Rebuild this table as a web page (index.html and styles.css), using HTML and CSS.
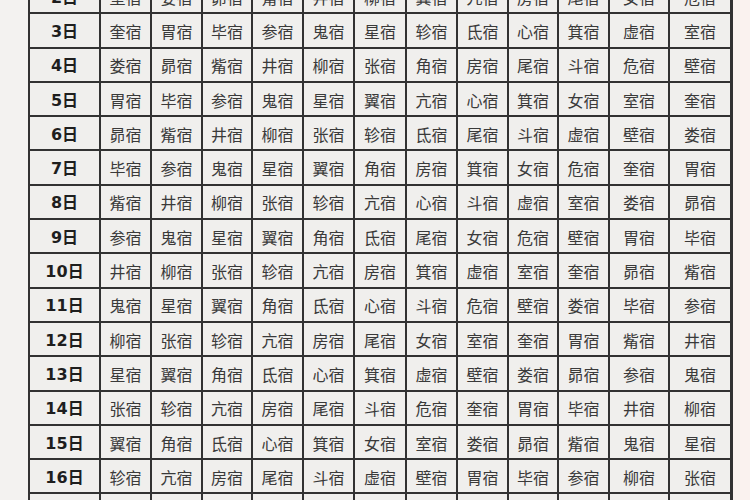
FILE: index.html
```html
<!DOCTYPE html>
<html lang="zh">
<head>
<meta charset="utf-8">
<title>宿曜表</title>
<link rel="stylesheet" href="styles.css">
</head>
<body>
<div class="page">
  <div class="side-left"></div>
  <table class="xiu">
    <colgroup>
      <col class="c-day"><col class="c49"><col class="c49"><col class="c48"><col class="c49"><col class="c49"><col class="c50"><col class="c49"><col class="c49"><col class="c48"><col class="c49"><col class="c58"><col class="c60">
    </colgroup>
    <tbody>
      <tr><th>2日</th><td>壁宿</td><td>娄宿</td><td>昴宿</td><td>觜宿</td><td>井宿</td><td>柳宿</td><td>翼宿</td><td>亢宿</td><td>房宿</td><td>尾宿</td><td>女宿</td><td>危宿</td></tr>
      <tr><th>3日</th><td>奎宿</td><td>胃宿</td><td>毕宿</td><td>参宿</td><td>鬼宿</td><td>星宿</td><td>轸宿</td><td>氐宿</td><td>心宿</td><td>箕宿</td><td>虚宿</td><td>室宿</td></tr>
      <tr><th>4日</th><td>娄宿</td><td>昴宿</td><td>觜宿</td><td>井宿</td><td>柳宿</td><td>张宿</td><td>角宿</td><td>房宿</td><td>尾宿</td><td>斗宿</td><td>危宿</td><td>壁宿</td></tr>
      <tr><th>5日</th><td>胃宿</td><td>毕宿</td><td>参宿</td><td>鬼宿</td><td>星宿</td><td>翼宿</td><td>亢宿</td><td>心宿</td><td>箕宿</td><td>女宿</td><td>室宿</td><td>奎宿</td></tr>
      <tr><th>6日</th><td>昴宿</td><td>觜宿</td><td>井宿</td><td>柳宿</td><td>张宿</td><td>轸宿</td><td>氐宿</td><td>尾宿</td><td>斗宿</td><td>虚宿</td><td>壁宿</td><td>娄宿</td></tr>
      <tr><th>7日</th><td>毕宿</td><td>参宿</td><td>鬼宿</td><td>星宿</td><td>翼宿</td><td>角宿</td><td>房宿</td><td>箕宿</td><td>女宿</td><td>危宿</td><td>奎宿</td><td>胃宿</td></tr>
      <tr><th>8日</th><td>觜宿</td><td>井宿</td><td>柳宿</td><td>张宿</td><td>轸宿</td><td>亢宿</td><td>心宿</td><td>斗宿</td><td>虚宿</td><td>室宿</td><td>娄宿</td><td>昴宿</td></tr>
      <tr><th>9日</th><td>参宿</td><td>鬼宿</td><td>星宿</td><td>翼宿</td><td>角宿</td><td>氐宿</td><td>尾宿</td><td>女宿</td><td>危宿</td><td>壁宿</td><td>胃宿</td><td>毕宿</td></tr>
      <tr><th>10日</th><td>井宿</td><td>柳宿</td><td>张宿</td><td>轸宿</td><td>亢宿</td><td>房宿</td><td>箕宿</td><td>虚宿</td><td>室宿</td><td>奎宿</td><td>昴宿</td><td>觜宿</td></tr>
      <tr><th>11日</th><td>鬼宿</td><td>星宿</td><td>翼宿</td><td>角宿</td><td>氐宿</td><td>心宿</td><td>斗宿</td><td>危宿</td><td>壁宿</td><td>娄宿</td><td>毕宿</td><td>参宿</td></tr>
      <tr><th>12日</th><td>柳宿</td><td>张宿</td><td>轸宿</td><td>亢宿</td><td>房宿</td><td>尾宿</td><td>女宿</td><td>室宿</td><td>奎宿</td><td>胃宿</td><td>觜宿</td><td>井宿</td></tr>
      <tr><th>13日</th><td>星宿</td><td>翼宿</td><td>角宿</td><td>氐宿</td><td>心宿</td><td>箕宿</td><td>虚宿</td><td>壁宿</td><td>娄宿</td><td>昴宿</td><td>参宿</td><td>鬼宿</td></tr>
      <tr><th>14日</th><td>张宿</td><td>轸宿</td><td>亢宿</td><td>房宿</td><td>尾宿</td><td>斗宿</td><td>危宿</td><td>奎宿</td><td>胃宿</td><td>毕宿</td><td>井宿</td><td>柳宿</td></tr>
      <tr><th>15日</th><td>翼宿</td><td>角宿</td><td>氐宿</td><td>心宿</td><td>箕宿</td><td>女宿</td><td>室宿</td><td>娄宿</td><td>昴宿</td><td>觜宿</td><td>鬼宿</td><td>星宿</td></tr>
      <tr><th>16日</th><td>轸宿</td><td>亢宿</td><td>房宿</td><td>尾宿</td><td>斗宿</td><td>虚宿</td><td>壁宿</td><td>胃宿</td><td>毕宿</td><td>参宿</td><td>柳宿</td><td>张宿</td></tr>
      <tr><th>17日</th><td>角宿</td><td>氐宿</td><td>心宿</td><td>箕宿</td><td>女宿</td><td>危宿</td><td>奎宿</td><td>昴宿</td><td>觜宿</td><td>井宿</td><td>星宿</td><td>翼宿</td></tr>
    </tbody>
  </table>
  <div class="side-right"></div>
</div>
</body>
</html>
```
FILE: styles.css
```css
html, body {
  margin: 0;
  padding: 0;
  height: 100%;
  overflow: hidden;
  background: #f4f3f1;
}

.page {
  display: flex;
  align-items: flex-start;
  height: 500px;
  overflow: hidden;
}

.side-left {
  width: 28px;
  flex: none;
  align-self: stretch;
  background: #f3f2f0;
}

.side-right {
  flex: 1;
  align-self: stretch;
  background: #faf2ef;
}

.xiu {
  flex: none;
  margin-top: -22px;
  border-collapse: separate;
  border-spacing: 2px;
  background: #323232;
  border-right: 1px solid #323232;
  table-layout: fixed;
  width: 705px;
  font-family: "Noto Sans CJK SC", "DejaVu Sans", sans-serif;
}

.c-day { width: 69px; }
.c48 { width: 48px; }
.c49 { width: 49px; }
.c50 { width: 50px; }
.c58 { width: 58px; }
.c60 { width: 60px; }

.xiu tr {
  height: 32.3px;
}

.xiu th,
.xiu td {
  padding: 0;
  background: #f0efed;
  text-align: center;
  vertical-align: middle;
  line-height: 16px;
  white-space: nowrap;
  overflow: hidden;
}

.xiu th {
  font-family: "DejaVu Sans", "Noto Sans CJK SC", sans-serif;
  font-weight: bold;
  font-size: 16px;
  color: #1e1e1e;
  padding-top: 3px;
}

.xiu td {
  font-size: 16px;
  color: #3a3a3a;
  padding-top: 1px;
}
```
